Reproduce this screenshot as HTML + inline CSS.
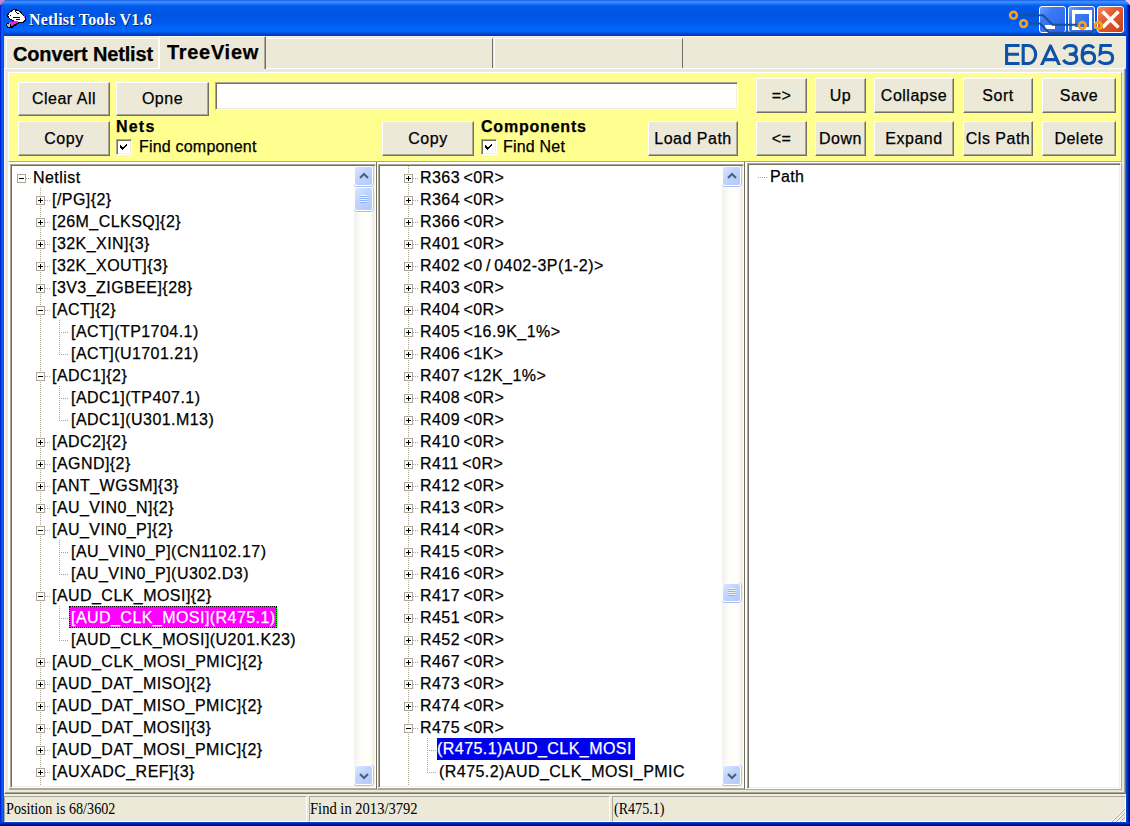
<!DOCTYPE html><html><head><meta charset="utf-8"><style>
html,body{margin:0;padding:0}
body{width:1130px;height:826px;overflow:hidden;position:relative;background:#ECE9D8;font-family:"Liberation Sans",sans-serif;font-size:16px;color:#000;-webkit-text-stroke:0.25px currentColor}
div{box-sizing:border-box}
.t{position:absolute;white-space:nowrap}
.btn{position:absolute;background:#ECE9D8;border-top:1px solid #fff;border-left:1px solid #fff;border-right:1px solid #716F64;border-bottom:1px solid #716F64;box-shadow:inset -1px -1px 0 #ACA899;text-align:center;font-size:16px;letter-spacing:0.5px}
.btn span{position:absolute;left:0;right:0;top:0;bottom:0;display:flex;align-items:center;justify-content:center}
</style></head><body>
<div style="position:absolute;left:0;top:0;width:1130px;height:36px;border-radius:5px 5px 0 0;
background:linear-gradient(to bottom,#0846D8 0px,#3D8FFF 1px,#2F86FF 3px,#0A62F0 5px,#0058E8 8px,#0054E3 14px,#0058EA 22px,#0063F8 27px,#0066FF 31px,#0050DC 33px,#003CC0 35px,#0036B0 36px)"></div>
<svg style="position:absolute;left:0;top:0" width="1130" height="8"><path d="M0 0 L5 0 L0 5 Z" fill="#D07ED0"/><path d="M1130 0 L1125 0 L1130 5 Z" fill="#F0C0F0"/></svg>
<div style="position:absolute;left:0;top:5px;width:4px;height:821px;background:linear-gradient(to right,#0019C8,#0030E0 1px,#1A6BFF 2px,#0050F0 3px)"></div>
<div style="position:absolute;left:1126px;top:5px;width:4px;height:821px;background:linear-gradient(to right,#0050F0,#0040D8 1px,#0020B0 2px,#001080 3px)"></div>
<div style="position:absolute;left:0;top:822px;width:1130px;height:4px;background:linear-gradient(to bottom,#0050F0,#0030C8 1px,#001CA0 2px,#001080 3px)"></div>
<svg style="position:absolute;left:4px;top:6px" width="26" height="26" viewBox="0 0 26 26" shape-rendering="crispEdges">
<path d="M3 8.5 L5 6 L8 4 L10 3 L12.5 3.2 L16 5 L18 7 L20 9.5 L21.8 10 L21.8 14.5 L20 16.5 L14 17 L9 15.3 L5 12.8 L3 10.8 Z" fill="#000"/>
<path d="M4.2 9 L6 6.8 L9 4.6 L11 4.1 L14 5.1 L16 6.3 L18 8.6 L20.6 11 L20.6 14 L19 15.5 L13 15.6 L8.5 14 L5 11.5 Z" fill="#fff"/>
<path d="M11 4.6 L13.5 7.6 L15.5 8.3 M9 11.6 L16 11.6 M11.5 13.6 L16 13.6 M5.5 9.2 L6.5 9.2" stroke="#000" stroke-width="1" fill="none"/>
<rect x="20" y="10" width="1.2" height="2.2" fill="#F020F0"/>
<path d="M6 16.5 L13 14.8 L14.5 15.8 L10 19 L7 19.8 Z" fill="#F020F0"/>
<path d="M7 20.5 L14.5 16 L16 16.6 L9 21.5 L7 22.5 Z" fill="#000"/>
<path d="M2.3 18 L6 16.3 L7 19.5 L6.5 22 L3.8 22 L2.3 19.8 Z" fill="#000"/>
<path d="M3.2 18.5 L5.6 17.3 L6.2 19.5 L5.8 21 L4 21 L3.2 19.5 Z" fill="#B8B8B8"/>
</svg>
<div class="t" style="left:29px;top:10px;line-height:20px;font-family:'Liberation Serif',serif;font-weight:bold;font-size:16px;color:#fff;letter-spacing:0.2px;-webkit-text-stroke:0;text-shadow:1px 1px 0 #0A2470">Netlist Tools V1.6</div>
<div style="position:absolute;left:1039px;top:6px;width:27px;height:27px;border:1px solid #fff;border-radius:3px;background:linear-gradient(135deg,#6FA0FF 0%,#3C7BF5 30%,#2663E8 100%)"><div style="position:absolute;left:5px;top:18px;width:10px;height:4px;background:#fff"></div></div>
<div style="position:absolute;left:1068px;top:6px;width:27px;height:27px;border:1px solid #fff;border-radius:3px;background:linear-gradient(135deg,#6FA0FF 0%,#3C7BF5 30%,#2663E8 100%)"><div style="position:absolute;left:3px;top:3px;width:20px;height:20px;border:3px solid #fff;border-top-width:4px"></div></div>
<div style="position:absolute;left:1097px;top:6px;width:27px;height:27px;border:1px solid #fff;border-radius:3px;background:linear-gradient(135deg,#F08A6A 0%,#E25B2E 40%,#C8401A 100%)"><svg style="position:absolute;left:0;top:0" width="25" height="25"><path d="M4.5 4.5 L20.5 20.5 M20.5 4.5 L4.5 20.5" stroke="#fff" stroke-width="3.6"/></svg></div>
<svg style="position:absolute;left:1000px;top:0" width="130" height="40">
<g fill="none" stroke="#1A5290" stroke-width="2">
<path d="M17 15.3 L43 15.3 L52.5 24.8 L78 24.8"/>
<path d="M27.5 23.6 L40 23.6 L49.3 32.8 L92 32.8 L97 27"/>
</g>
<g fill="none" stroke="#F5A020" stroke-width="2.6">
<circle cx="13.5" cy="15.3" r="3.4"/><circle cx="23.6" cy="23.6" r="3.4"/><circle cx="82.3" cy="25.5" r="3.4"/><circle cx="98.4" cy="25.5" r="3.4"/>
</g></svg>
<div style="position:absolute;left:4px;top:36px;width:1122px;height:1px;background:#FBF4DC"></div>
<div style="position:absolute;left:4px;top:68px;width:1122px;height:726px;border-top:1px solid #fff;border-left:1px solid #fff;border-right:1px solid #716F64;border-bottom:1px solid #716F64;box-shadow:inset -1px -1px 0 #ACA899"></div>
<div style="position:absolute;left:6px;top:38px;width:153px;height:31px;border:1px solid #fff;border-bottom:none"></div>
<div style="position:absolute;left:266px;top:38px;width:227px;height:30px;border-top:1px solid #fff;border-right:1px solid #716F64"></div>
<div style="position:absolute;left:494px;top:38px;width:189px;height:30px;border-top:1px solid #fff;border-left:1px solid #fff;border-right:1px solid #716F64"></div>
<div style="position:absolute;left:159px;top:36px;width:107px;height:33px;background:#ECE9D8;border-top:1px solid #fff;border-left:1px solid #fff;border-right:1px solid #716F64;box-shadow:inset -1px 0 0 #ACA899"></div>
<div class="t" style="left:13px;top:38px;line-height:33px;font-weight:bold;font-size:20px;letter-spacing:-0.15px">Convert Netlist</div>
<div class="t" style="left:167px;top:36px;line-height:33px;font-weight:bold;font-size:20px;letter-spacing:0.7px">TreeView</div>
<svg style="position:absolute;left:1000px;top:38px" width="122" height="32" viewBox="0 0 122 32">
<clipPath id="eclip"><rect x="0" y="4" width="122" height="23"/></clipPath>
<g fill="none" stroke="#0D52A8" stroke-width="3.1" stroke-linejoin="miter" clip-path="url(#eclip)">
<path d="M19.6 7.5 H6.6 V25.5 H19.6 M6.6 16.3 H19"/>
<path d="M23.2 7.5 H28.3 A7.4 9 0 0 1 28.3 25.5 H23.2 Z"/>
<path d="M41 28.5 L50.5 7.8 L60 28.5 M44 21.6 H57" stroke-linejoin="round"/>
<path d="M63.8 11.2 Q65.5 7.5 70.2 7.5 Q76.3 7.5 76.3 11.9 Q76.3 16.2 70.2 16.2 H68.8 M70.2 16.2 Q76.8 16.2 76.8 20.9 Q76.8 25.5 70.2 25.5 Q65.2 25.5 63.4 21.8"/>
<path d="M93.8 10.2 Q92 7.5 88.6 7.5 Q82.1 7.5 82.1 17.2 Q82.1 25.5 88.6 25.5 Q94.6 25.5 94.6 20 Q94.6 14.4 88.6 14.4 Q83.6 14.4 82.3 18.2"/>
<path d="M111.8 7.5 H101 L100.2 15.6 Q102.2 14.3 105.6 14.3 Q112.6 14.3 112.6 19.9 Q112.6 25.5 105.6 25.5 Q100.6 25.5 99 22.4"/>
</g></svg>
<div style="position:absolute;left:8px;top:72px;width:1114px;height:90px;background:#FFFF8F;border-top:1px solid #fff;border-left:1px solid #fff;border-right:1px solid #ACA899;border-bottom:1px solid #ACA899"></div>
<div style="position:absolute;left:8px;top:162px;width:1114px;height:628px;border-top:2px solid #fff;border-left:2px solid #fff;border-right:1px solid #ACA899;border-bottom:1px solid #ACA899"></div>
<div class="btn" style="left:18px;top:82px;width:92px;height:34px;"><span>Clear All</span></div>
<div class="btn" style="left:116px;top:82px;width:93px;height:34px;"><span>Opne</span></div>
<div style="position:absolute;left:215px;top:82px;width:523px;height:28px;background:#fff;border-top:1px solid #ACA899;border-left:1px solid #ACA899;border-right:1px solid #fff;border-bottom:1px solid #fff;box-shadow:inset 1px 1px 0 #716F64,inset -1px -1px 0 #F1EFE2"></div>
<div class="btn" style="left:18px;top:121px;width:92px;height:35px;"><span>Copy</span></div>
<div class="btn" style="left:382px;top:121px;width:92px;height:35px;"><span>Copy</span></div>
<div class="btn" style="left:648px;top:121px;width:90px;height:35px;"><span>Load Path</span></div>
<div class="btn" style="left:756px;top:78px;width:51px;height:35px;"><span>=&gt;</span></div>
<div class="btn" style="left:815px;top:78px;width:51px;height:35px;"><span>Up</span></div>
<div class="btn" style="left:874px;top:78px;width:80px;height:35px;"><span>Collapse</span></div>
<div class="btn" style="left:963px;top:78px;width:70px;height:35px;"><span>Sort</span></div>
<div class="btn" style="left:1042px;top:78px;width:74px;height:35px;"><span>Save</span></div>
<div class="btn" style="left:756px;top:121px;width:51px;height:35px;"><span>&lt;=</span></div>
<div class="btn" style="left:815px;top:121px;width:51px;height:35px;"><span>Down</span></div>
<div class="btn" style="left:874px;top:121px;width:80px;height:35px;"><span>Expand</span></div>
<div class="btn" style="left:963px;top:121px;width:70px;height:35px;"><span>Cls Path</span></div>
<div class="btn" style="left:1042px;top:121px;width:74px;height:35px;"><span>Delete</span></div>
<div class="t" style="left:116px;top:116px;line-height:22px;font-weight:bold;font-size:16px;letter-spacing:1.2px">Nets</div>
<div class="t" style="left:481px;top:116px;line-height:22px;font-weight:bold;font-size:16px;letter-spacing:0.8px">Components</div>
<div style="position:absolute;left:116px;top:139px;width:16px;height:16px;background:#fff;border-top:1px solid #ACA899;border-left:1px solid #ACA899;border-right:1px solid #fff;border-bottom:1px solid #fff;box-shadow:inset 1px 1px 0 #716F64,inset -1px -1px 0 #F1EFE2"><svg style="position:absolute;left:0;top:0" width="14" height="14" shape-rendering="crispEdges"><path d="M3 5h1v1h-1zM3 6h2v1h-2zM3 7h3v1h-3zM4 8h2v1h-2zM5 9h1v1h-1zM6 7h1v2h-1zM7 6h1v2h-1zM8 5h1v2h-1zM9 4h1v2h-1z" fill="#000"/></svg></div>
<div style="position:absolute;left:481px;top:139px;width:16px;height:16px;background:#fff;border-top:1px solid #ACA899;border-left:1px solid #ACA899;border-right:1px solid #fff;border-bottom:1px solid #fff;box-shadow:inset 1px 1px 0 #716F64,inset -1px -1px 0 #F1EFE2"><svg style="position:absolute;left:0;top:0" width="14" height="14" shape-rendering="crispEdges"><path d="M3 5h1v1h-1zM3 6h2v1h-2zM3 7h3v1h-3zM4 8h2v1h-2zM5 9h1v1h-1zM6 7h1v2h-1zM7 6h1v2h-1zM8 5h1v2h-1zM9 4h1v2h-1z" fill="#000"/></svg></div>
<div class="t" style="left:139px;top:136px;line-height:22px;letter-spacing:0.2px">Find component</div>
<div class="t" style="left:503px;top:136px;line-height:22px;letter-spacing:0.2px">Find Net</div>
<div style="position:absolute;left:10px;top:164px;width:366px;height:624px;background:#fff;border-top:1px solid #ACA899;border-left:1px solid #ACA899;border-right:1px solid #fff;border-bottom:1px solid #fff;box-shadow:inset 1px 1px 0 #716F64,inset -1px -1px 0 #F1EFE2"></div>
<div style="position:absolute;left:378px;top:164px;width:366px;height:624px;background:#fff;border-top:1px solid #ACA899;border-left:1px solid #ACA899;border-right:1px solid #fff;border-bottom:1px solid #fff;box-shadow:inset 1px 1px 0 #716F64,inset -1px -1px 0 #F1EFE2"></div>
<div style="position:absolute;left:747px;top:163px;width:374px;height:626px;background:#fff;border-top:1px solid #ACA899;border-left:1px solid #ACA899;border-right:1px solid #fff;border-bottom:1px solid #fff;box-shadow:inset 1px 1px 0 #716F64,inset -1px -1px 0 #F1EFE2"></div>
<div style="position:absolute;left:9px;top:788px;width:737px;height:1px;background:#ACA899"></div>
<div style="position:absolute;left:376px;top:162px;width:1px;height:627px;background:#716F64"></div>
<div style="position:absolute;left:377px;top:162px;width:1px;height:627px;background:#fff"></div>
<div style="position:absolute;left:744px;top:162px;width:1px;height:627px;background:#716F64"></div>
<div style="position:absolute;left:745px;top:162px;width:2px;height:627px;background:#fff"></div>
<div style="position:absolute;left:40px;top:188px;width:1px;height:597px;background:repeating-linear-gradient(to bottom,#A9A493 0,#A9A493 1px,transparent 1px,transparent 2px)"></div>
<div style="position:absolute;left:59px;top:320px;width:1px;height:34px;background:repeating-linear-gradient(to bottom,#A9A493 0,#A9A493 1px,transparent 1px,transparent 2px)"></div>
<div style="position:absolute;left:59px;top:386px;width:1px;height:34px;background:repeating-linear-gradient(to bottom,#A9A493 0,#A9A493 1px,transparent 1px,transparent 2px)"></div>
<div style="position:absolute;left:59px;top:540px;width:1px;height:34px;background:repeating-linear-gradient(to bottom,#A9A493 0,#A9A493 1px,transparent 1px,transparent 2px)"></div>
<div style="position:absolute;left:59px;top:606px;width:1px;height:34px;background:repeating-linear-gradient(to bottom,#A9A493 0,#A9A493 1px,transparent 1px,transparent 2px)"></div>
<div style="position:absolute;left:0;top:0;width:354px;height:826px;overflow:hidden">
<div style="position:absolute;left:26px;top:178px;width:5px;height:1px;background:repeating-linear-gradient(to right,#A9A493 0,#A9A493 1px,transparent 1px,transparent 2px)"></div>
<div style="position:absolute;left:17px;top:174px;width:9px;height:9px;border:1px solid #ACA899;background:#fff"><div style="position:absolute;left:1px;top:3px;width:5px;height:1px;background:#000"></div></div>
<div class="t" style="left:33px;top:167px;line-height:22px;letter-spacing:0.45px;word-spacing:-1.5px">Netlist</div>
<div style="position:absolute;left:45px;top:200px;width:5px;height:1px;background:repeating-linear-gradient(to right,#A9A493 0,#A9A493 1px,transparent 1px,transparent 2px)"></div>
<div style="position:absolute;left:36px;top:196px;width:9px;height:9px;border:1px solid #ACA899;background:#fff"><div style="position:absolute;left:1px;top:3px;width:5px;height:1px;background:#000"></div><div style="position:absolute;left:3px;top:1px;width:1px;height:5px;background:#000"></div></div>
<div class="t" style="left:52px;top:189px;line-height:22px;letter-spacing:0.45px;word-spacing:-1.5px">[/PG]{2}</div>
<div style="position:absolute;left:45px;top:222px;width:5px;height:1px;background:repeating-linear-gradient(to right,#A9A493 0,#A9A493 1px,transparent 1px,transparent 2px)"></div>
<div style="position:absolute;left:36px;top:218px;width:9px;height:9px;border:1px solid #ACA899;background:#fff"><div style="position:absolute;left:1px;top:3px;width:5px;height:1px;background:#000"></div><div style="position:absolute;left:3px;top:1px;width:1px;height:5px;background:#000"></div></div>
<div class="t" style="left:52px;top:211px;line-height:22px;letter-spacing:0.45px;word-spacing:-1.5px">[26M_CLKSQ]{2}</div>
<div style="position:absolute;left:45px;top:244px;width:5px;height:1px;background:repeating-linear-gradient(to right,#A9A493 0,#A9A493 1px,transparent 1px,transparent 2px)"></div>
<div style="position:absolute;left:36px;top:240px;width:9px;height:9px;border:1px solid #ACA899;background:#fff"><div style="position:absolute;left:1px;top:3px;width:5px;height:1px;background:#000"></div><div style="position:absolute;left:3px;top:1px;width:1px;height:5px;background:#000"></div></div>
<div class="t" style="left:52px;top:233px;line-height:22px;letter-spacing:0.45px;word-spacing:-1.5px">[32K_XIN]{3}</div>
<div style="position:absolute;left:45px;top:266px;width:5px;height:1px;background:repeating-linear-gradient(to right,#A9A493 0,#A9A493 1px,transparent 1px,transparent 2px)"></div>
<div style="position:absolute;left:36px;top:262px;width:9px;height:9px;border:1px solid #ACA899;background:#fff"><div style="position:absolute;left:1px;top:3px;width:5px;height:1px;background:#000"></div><div style="position:absolute;left:3px;top:1px;width:1px;height:5px;background:#000"></div></div>
<div class="t" style="left:52px;top:255px;line-height:22px;letter-spacing:0.45px;word-spacing:-1.5px">[32K_XOUT]{3}</div>
<div style="position:absolute;left:45px;top:288px;width:5px;height:1px;background:repeating-linear-gradient(to right,#A9A493 0,#A9A493 1px,transparent 1px,transparent 2px)"></div>
<div style="position:absolute;left:36px;top:284px;width:9px;height:9px;border:1px solid #ACA899;background:#fff"><div style="position:absolute;left:1px;top:3px;width:5px;height:1px;background:#000"></div><div style="position:absolute;left:3px;top:1px;width:1px;height:5px;background:#000"></div></div>
<div class="t" style="left:52px;top:277px;line-height:22px;letter-spacing:0.45px;word-spacing:-1.5px">[3V3_ZIGBEE]{28}</div>
<div style="position:absolute;left:45px;top:310px;width:5px;height:1px;background:repeating-linear-gradient(to right,#A9A493 0,#A9A493 1px,transparent 1px,transparent 2px)"></div>
<div style="position:absolute;left:36px;top:306px;width:9px;height:9px;border:1px solid #ACA899;background:#fff"><div style="position:absolute;left:1px;top:3px;width:5px;height:1px;background:#000"></div></div>
<div class="t" style="left:52px;top:299px;line-height:22px;letter-spacing:0.45px;word-spacing:-1.5px">[ACT]{2}</div>
<div style="position:absolute;left:59px;top:332px;width:10px;height:1px;background:repeating-linear-gradient(to right,#A9A493 0,#A9A493 1px,transparent 1px,transparent 2px)"></div>
<div class="t" style="left:71px;top:321px;line-height:22px;letter-spacing:0.45px;word-spacing:-1.5px">[ACT](TP1704.1)</div>
<div style="position:absolute;left:59px;top:354px;width:10px;height:1px;background:repeating-linear-gradient(to right,#A9A493 0,#A9A493 1px,transparent 1px,transparent 2px)"></div>
<div class="t" style="left:71px;top:343px;line-height:22px;letter-spacing:0.45px;word-spacing:-1.5px">[ACT](U1701.21)</div>
<div style="position:absolute;left:45px;top:376px;width:5px;height:1px;background:repeating-linear-gradient(to right,#A9A493 0,#A9A493 1px,transparent 1px,transparent 2px)"></div>
<div style="position:absolute;left:36px;top:372px;width:9px;height:9px;border:1px solid #ACA899;background:#fff"><div style="position:absolute;left:1px;top:3px;width:5px;height:1px;background:#000"></div></div>
<div class="t" style="left:52px;top:365px;line-height:22px;letter-spacing:0.45px;word-spacing:-1.5px">[ADC1]{2}</div>
<div style="position:absolute;left:59px;top:398px;width:10px;height:1px;background:repeating-linear-gradient(to right,#A9A493 0,#A9A493 1px,transparent 1px,transparent 2px)"></div>
<div class="t" style="left:71px;top:387px;line-height:22px;letter-spacing:0.45px;word-spacing:-1.5px">[ADC1](TP407.1)</div>
<div style="position:absolute;left:59px;top:420px;width:10px;height:1px;background:repeating-linear-gradient(to right,#A9A493 0,#A9A493 1px,transparent 1px,transparent 2px)"></div>
<div class="t" style="left:71px;top:409px;line-height:22px;letter-spacing:0.45px;word-spacing:-1.5px">[ADC1](U301.M13)</div>
<div style="position:absolute;left:45px;top:442px;width:5px;height:1px;background:repeating-linear-gradient(to right,#A9A493 0,#A9A493 1px,transparent 1px,transparent 2px)"></div>
<div style="position:absolute;left:36px;top:438px;width:9px;height:9px;border:1px solid #ACA899;background:#fff"><div style="position:absolute;left:1px;top:3px;width:5px;height:1px;background:#000"></div><div style="position:absolute;left:3px;top:1px;width:1px;height:5px;background:#000"></div></div>
<div class="t" style="left:52px;top:431px;line-height:22px;letter-spacing:0.45px;word-spacing:-1.5px">[ADC2]{2}</div>
<div style="position:absolute;left:45px;top:464px;width:5px;height:1px;background:repeating-linear-gradient(to right,#A9A493 0,#A9A493 1px,transparent 1px,transparent 2px)"></div>
<div style="position:absolute;left:36px;top:460px;width:9px;height:9px;border:1px solid #ACA899;background:#fff"><div style="position:absolute;left:1px;top:3px;width:5px;height:1px;background:#000"></div><div style="position:absolute;left:3px;top:1px;width:1px;height:5px;background:#000"></div></div>
<div class="t" style="left:52px;top:453px;line-height:22px;letter-spacing:0.45px;word-spacing:-1.5px">[AGND]{2}</div>
<div style="position:absolute;left:45px;top:486px;width:5px;height:1px;background:repeating-linear-gradient(to right,#A9A493 0,#A9A493 1px,transparent 1px,transparent 2px)"></div>
<div style="position:absolute;left:36px;top:482px;width:9px;height:9px;border:1px solid #ACA899;background:#fff"><div style="position:absolute;left:1px;top:3px;width:5px;height:1px;background:#000"></div><div style="position:absolute;left:3px;top:1px;width:1px;height:5px;background:#000"></div></div>
<div class="t" style="left:52px;top:475px;line-height:22px;letter-spacing:0.45px;word-spacing:-1.5px">[ANT_WGSM]{3}</div>
<div style="position:absolute;left:45px;top:508px;width:5px;height:1px;background:repeating-linear-gradient(to right,#A9A493 0,#A9A493 1px,transparent 1px,transparent 2px)"></div>
<div style="position:absolute;left:36px;top:504px;width:9px;height:9px;border:1px solid #ACA899;background:#fff"><div style="position:absolute;left:1px;top:3px;width:5px;height:1px;background:#000"></div><div style="position:absolute;left:3px;top:1px;width:1px;height:5px;background:#000"></div></div>
<div class="t" style="left:52px;top:497px;line-height:22px;letter-spacing:0.45px;word-spacing:-1.5px">[AU_VIN0_N]{2}</div>
<div style="position:absolute;left:45px;top:530px;width:5px;height:1px;background:repeating-linear-gradient(to right,#A9A493 0,#A9A493 1px,transparent 1px,transparent 2px)"></div>
<div style="position:absolute;left:36px;top:526px;width:9px;height:9px;border:1px solid #ACA899;background:#fff"><div style="position:absolute;left:1px;top:3px;width:5px;height:1px;background:#000"></div></div>
<div class="t" style="left:52px;top:519px;line-height:22px;letter-spacing:0.45px;word-spacing:-1.5px">[AU_VIN0_P]{2}</div>
<div style="position:absolute;left:59px;top:552px;width:10px;height:1px;background:repeating-linear-gradient(to right,#A9A493 0,#A9A493 1px,transparent 1px,transparent 2px)"></div>
<div class="t" style="left:71px;top:541px;line-height:22px;letter-spacing:0.45px;word-spacing:-1.5px">[AU_VIN0_P](CN1102.17)</div>
<div style="position:absolute;left:59px;top:574px;width:10px;height:1px;background:repeating-linear-gradient(to right,#A9A493 0,#A9A493 1px,transparent 1px,transparent 2px)"></div>
<div class="t" style="left:71px;top:563px;line-height:22px;letter-spacing:0.45px;word-spacing:-1.5px">[AU_VIN0_P](U302.D3)</div>
<div style="position:absolute;left:45px;top:596px;width:5px;height:1px;background:repeating-linear-gradient(to right,#A9A493 0,#A9A493 1px,transparent 1px,transparent 2px)"></div>
<div style="position:absolute;left:36px;top:592px;width:9px;height:9px;border:1px solid #ACA899;background:#fff"><div style="position:absolute;left:1px;top:3px;width:5px;height:1px;background:#000"></div></div>
<div class="t" style="left:52px;top:585px;line-height:22px;letter-spacing:0.45px;word-spacing:-1.5px">[AUD_CLK_MOSI]{2}</div>
<div style="position:absolute;left:59px;top:618px;width:10px;height:1px;background:repeating-linear-gradient(to right,#A9A493 0,#A9A493 1px,transparent 1px,transparent 2px)"></div>
<div class="t" style="left:69px;top:606px;height:22px;line-height:22px;padding:0 0 0 1px;background:#FF00FF;color:#fff;letter-spacing:0.45px;word-spacing:-1.5px;border:1px solid #00FF00">[AUD_CLK_MOSI](R475.1)<div style="position:absolute;left:-1px;top:-1px;right:-1px;bottom:-1px;border:1px dotted #000"></div></div>
<div style="position:absolute;left:59px;top:640px;width:10px;height:1px;background:repeating-linear-gradient(to right,#A9A493 0,#A9A493 1px,transparent 1px,transparent 2px)"></div>
<div class="t" style="left:71px;top:629px;line-height:22px;letter-spacing:0.45px;word-spacing:-1.5px">[AUD_CLK_MOSI](U201.K23)</div>
<div style="position:absolute;left:45px;top:662px;width:5px;height:1px;background:repeating-linear-gradient(to right,#A9A493 0,#A9A493 1px,transparent 1px,transparent 2px)"></div>
<div style="position:absolute;left:36px;top:658px;width:9px;height:9px;border:1px solid #ACA899;background:#fff"><div style="position:absolute;left:1px;top:3px;width:5px;height:1px;background:#000"></div><div style="position:absolute;left:3px;top:1px;width:1px;height:5px;background:#000"></div></div>
<div class="t" style="left:52px;top:651px;line-height:22px;letter-spacing:0.45px;word-spacing:-1.5px">[AUD_CLK_MOSI_PMIC]{2}</div>
<div style="position:absolute;left:45px;top:684px;width:5px;height:1px;background:repeating-linear-gradient(to right,#A9A493 0,#A9A493 1px,transparent 1px,transparent 2px)"></div>
<div style="position:absolute;left:36px;top:680px;width:9px;height:9px;border:1px solid #ACA899;background:#fff"><div style="position:absolute;left:1px;top:3px;width:5px;height:1px;background:#000"></div><div style="position:absolute;left:3px;top:1px;width:1px;height:5px;background:#000"></div></div>
<div class="t" style="left:52px;top:673px;line-height:22px;letter-spacing:0.45px;word-spacing:-1.5px">[AUD_DAT_MISO]{2}</div>
<div style="position:absolute;left:45px;top:706px;width:5px;height:1px;background:repeating-linear-gradient(to right,#A9A493 0,#A9A493 1px,transparent 1px,transparent 2px)"></div>
<div style="position:absolute;left:36px;top:702px;width:9px;height:9px;border:1px solid #ACA899;background:#fff"><div style="position:absolute;left:1px;top:3px;width:5px;height:1px;background:#000"></div><div style="position:absolute;left:3px;top:1px;width:1px;height:5px;background:#000"></div></div>
<div class="t" style="left:52px;top:695px;line-height:22px;letter-spacing:0.45px;word-spacing:-1.5px">[AUD_DAT_MISO_PMIC]{2}</div>
<div style="position:absolute;left:45px;top:728px;width:5px;height:1px;background:repeating-linear-gradient(to right,#A9A493 0,#A9A493 1px,transparent 1px,transparent 2px)"></div>
<div style="position:absolute;left:36px;top:724px;width:9px;height:9px;border:1px solid #ACA899;background:#fff"><div style="position:absolute;left:1px;top:3px;width:5px;height:1px;background:#000"></div><div style="position:absolute;left:3px;top:1px;width:1px;height:5px;background:#000"></div></div>
<div class="t" style="left:52px;top:717px;line-height:22px;letter-spacing:0.45px;word-spacing:-1.5px">[AUD_DAT_MOSI]{3}</div>
<div style="position:absolute;left:45px;top:750px;width:5px;height:1px;background:repeating-linear-gradient(to right,#A9A493 0,#A9A493 1px,transparent 1px,transparent 2px)"></div>
<div style="position:absolute;left:36px;top:746px;width:9px;height:9px;border:1px solid #ACA899;background:#fff"><div style="position:absolute;left:1px;top:3px;width:5px;height:1px;background:#000"></div><div style="position:absolute;left:3px;top:1px;width:1px;height:5px;background:#000"></div></div>
<div class="t" style="left:52px;top:739px;line-height:22px;letter-spacing:0.45px;word-spacing:-1.5px">[AUD_DAT_MOSI_PMIC]{2}</div>
<div style="position:absolute;left:45px;top:772px;width:5px;height:1px;background:repeating-linear-gradient(to right,#A9A493 0,#A9A493 1px,transparent 1px,transparent 2px)"></div>
<div style="position:absolute;left:36px;top:768px;width:9px;height:9px;border:1px solid #ACA899;background:#fff"><div style="position:absolute;left:1px;top:3px;width:5px;height:1px;background:#000"></div><div style="position:absolute;left:3px;top:1px;width:1px;height:5px;background:#000"></div></div>
<div class="t" style="left:52px;top:761px;line-height:22px;letter-spacing:0.45px;word-spacing:-1.5px">[AUXADC_REF]{3}</div>
</div>
<div style="position:absolute;left:408px;top:166px;width:1px;height:619px;background:repeating-linear-gradient(to bottom,#A9A493 0,#A9A493 1px,transparent 1px,transparent 2px)"></div>
<div style="position:absolute;left:427px;top:738px;width:1px;height:34px;background:repeating-linear-gradient(to bottom,#A9A493 0,#A9A493 1px,transparent 1px,transparent 2px)"></div>
<div style="position:absolute;left:0;top:0;width:722px;height:826px;overflow:hidden">
<div style="position:absolute;left:413px;top:178px;width:5px;height:1px;background:repeating-linear-gradient(to right,#A9A493 0,#A9A493 1px,transparent 1px,transparent 2px)"></div>
<div style="position:absolute;left:404px;top:174px;width:9px;height:9px;border:1px solid #ACA899;background:#fff"><div style="position:absolute;left:1px;top:3px;width:5px;height:1px;background:#000"></div><div style="position:absolute;left:3px;top:1px;width:1px;height:5px;background:#000"></div></div>
<div class="t" style="left:420px;top:167px;line-height:22px;letter-spacing:0.45px;word-spacing:-1.5px">R363 &lt;0R&gt;</div>
<div style="position:absolute;left:413px;top:200px;width:5px;height:1px;background:repeating-linear-gradient(to right,#A9A493 0,#A9A493 1px,transparent 1px,transparent 2px)"></div>
<div style="position:absolute;left:404px;top:196px;width:9px;height:9px;border:1px solid #ACA899;background:#fff"><div style="position:absolute;left:1px;top:3px;width:5px;height:1px;background:#000"></div><div style="position:absolute;left:3px;top:1px;width:1px;height:5px;background:#000"></div></div>
<div class="t" style="left:420px;top:189px;line-height:22px;letter-spacing:0.45px;word-spacing:-1.5px">R364 &lt;0R&gt;</div>
<div style="position:absolute;left:413px;top:222px;width:5px;height:1px;background:repeating-linear-gradient(to right,#A9A493 0,#A9A493 1px,transparent 1px,transparent 2px)"></div>
<div style="position:absolute;left:404px;top:218px;width:9px;height:9px;border:1px solid #ACA899;background:#fff"><div style="position:absolute;left:1px;top:3px;width:5px;height:1px;background:#000"></div><div style="position:absolute;left:3px;top:1px;width:1px;height:5px;background:#000"></div></div>
<div class="t" style="left:420px;top:211px;line-height:22px;letter-spacing:0.45px;word-spacing:-1.5px">R366 &lt;0R&gt;</div>
<div style="position:absolute;left:413px;top:244px;width:5px;height:1px;background:repeating-linear-gradient(to right,#A9A493 0,#A9A493 1px,transparent 1px,transparent 2px)"></div>
<div style="position:absolute;left:404px;top:240px;width:9px;height:9px;border:1px solid #ACA899;background:#fff"><div style="position:absolute;left:1px;top:3px;width:5px;height:1px;background:#000"></div><div style="position:absolute;left:3px;top:1px;width:1px;height:5px;background:#000"></div></div>
<div class="t" style="left:420px;top:233px;line-height:22px;letter-spacing:0.45px;word-spacing:-1.5px">R401 &lt;0R&gt;</div>
<div style="position:absolute;left:413px;top:266px;width:5px;height:1px;background:repeating-linear-gradient(to right,#A9A493 0,#A9A493 1px,transparent 1px,transparent 2px)"></div>
<div style="position:absolute;left:404px;top:262px;width:9px;height:9px;border:1px solid #ACA899;background:#fff"><div style="position:absolute;left:1px;top:3px;width:5px;height:1px;background:#000"></div><div style="position:absolute;left:3px;top:1px;width:1px;height:5px;background:#000"></div></div>
<div class="t" style="left:420px;top:255px;line-height:22px;letter-spacing:0.45px;word-spacing:-1.5px">R402 &lt;0 / 0402-3P(1-2)&gt;</div>
<div style="position:absolute;left:413px;top:288px;width:5px;height:1px;background:repeating-linear-gradient(to right,#A9A493 0,#A9A493 1px,transparent 1px,transparent 2px)"></div>
<div style="position:absolute;left:404px;top:284px;width:9px;height:9px;border:1px solid #ACA899;background:#fff"><div style="position:absolute;left:1px;top:3px;width:5px;height:1px;background:#000"></div><div style="position:absolute;left:3px;top:1px;width:1px;height:5px;background:#000"></div></div>
<div class="t" style="left:420px;top:277px;line-height:22px;letter-spacing:0.45px;word-spacing:-1.5px">R403 &lt;0R&gt;</div>
<div style="position:absolute;left:413px;top:310px;width:5px;height:1px;background:repeating-linear-gradient(to right,#A9A493 0,#A9A493 1px,transparent 1px,transparent 2px)"></div>
<div style="position:absolute;left:404px;top:306px;width:9px;height:9px;border:1px solid #ACA899;background:#fff"><div style="position:absolute;left:1px;top:3px;width:5px;height:1px;background:#000"></div><div style="position:absolute;left:3px;top:1px;width:1px;height:5px;background:#000"></div></div>
<div class="t" style="left:420px;top:299px;line-height:22px;letter-spacing:0.45px;word-spacing:-1.5px">R404 &lt;0R&gt;</div>
<div style="position:absolute;left:413px;top:332px;width:5px;height:1px;background:repeating-linear-gradient(to right,#A9A493 0,#A9A493 1px,transparent 1px,transparent 2px)"></div>
<div style="position:absolute;left:404px;top:328px;width:9px;height:9px;border:1px solid #ACA899;background:#fff"><div style="position:absolute;left:1px;top:3px;width:5px;height:1px;background:#000"></div><div style="position:absolute;left:3px;top:1px;width:1px;height:5px;background:#000"></div></div>
<div class="t" style="left:420px;top:321px;line-height:22px;letter-spacing:0.45px;word-spacing:-1.5px">R405 &lt;16.9K_1%&gt;</div>
<div style="position:absolute;left:413px;top:354px;width:5px;height:1px;background:repeating-linear-gradient(to right,#A9A493 0,#A9A493 1px,transparent 1px,transparent 2px)"></div>
<div style="position:absolute;left:404px;top:350px;width:9px;height:9px;border:1px solid #ACA899;background:#fff"><div style="position:absolute;left:1px;top:3px;width:5px;height:1px;background:#000"></div><div style="position:absolute;left:3px;top:1px;width:1px;height:5px;background:#000"></div></div>
<div class="t" style="left:420px;top:343px;line-height:22px;letter-spacing:0.45px;word-spacing:-1.5px">R406 &lt;1K&gt;</div>
<div style="position:absolute;left:413px;top:376px;width:5px;height:1px;background:repeating-linear-gradient(to right,#A9A493 0,#A9A493 1px,transparent 1px,transparent 2px)"></div>
<div style="position:absolute;left:404px;top:372px;width:9px;height:9px;border:1px solid #ACA899;background:#fff"><div style="position:absolute;left:1px;top:3px;width:5px;height:1px;background:#000"></div><div style="position:absolute;left:3px;top:1px;width:1px;height:5px;background:#000"></div></div>
<div class="t" style="left:420px;top:365px;line-height:22px;letter-spacing:0.45px;word-spacing:-1.5px">R407 &lt;12K_1%&gt;</div>
<div style="position:absolute;left:413px;top:398px;width:5px;height:1px;background:repeating-linear-gradient(to right,#A9A493 0,#A9A493 1px,transparent 1px,transparent 2px)"></div>
<div style="position:absolute;left:404px;top:394px;width:9px;height:9px;border:1px solid #ACA899;background:#fff"><div style="position:absolute;left:1px;top:3px;width:5px;height:1px;background:#000"></div><div style="position:absolute;left:3px;top:1px;width:1px;height:5px;background:#000"></div></div>
<div class="t" style="left:420px;top:387px;line-height:22px;letter-spacing:0.45px;word-spacing:-1.5px">R408 &lt;0R&gt;</div>
<div style="position:absolute;left:413px;top:420px;width:5px;height:1px;background:repeating-linear-gradient(to right,#A9A493 0,#A9A493 1px,transparent 1px,transparent 2px)"></div>
<div style="position:absolute;left:404px;top:416px;width:9px;height:9px;border:1px solid #ACA899;background:#fff"><div style="position:absolute;left:1px;top:3px;width:5px;height:1px;background:#000"></div><div style="position:absolute;left:3px;top:1px;width:1px;height:5px;background:#000"></div></div>
<div class="t" style="left:420px;top:409px;line-height:22px;letter-spacing:0.45px;word-spacing:-1.5px">R409 &lt;0R&gt;</div>
<div style="position:absolute;left:413px;top:442px;width:5px;height:1px;background:repeating-linear-gradient(to right,#A9A493 0,#A9A493 1px,transparent 1px,transparent 2px)"></div>
<div style="position:absolute;left:404px;top:438px;width:9px;height:9px;border:1px solid #ACA899;background:#fff"><div style="position:absolute;left:1px;top:3px;width:5px;height:1px;background:#000"></div><div style="position:absolute;left:3px;top:1px;width:1px;height:5px;background:#000"></div></div>
<div class="t" style="left:420px;top:431px;line-height:22px;letter-spacing:0.45px;word-spacing:-1.5px">R410 &lt;0R&gt;</div>
<div style="position:absolute;left:413px;top:464px;width:5px;height:1px;background:repeating-linear-gradient(to right,#A9A493 0,#A9A493 1px,transparent 1px,transparent 2px)"></div>
<div style="position:absolute;left:404px;top:460px;width:9px;height:9px;border:1px solid #ACA899;background:#fff"><div style="position:absolute;left:1px;top:3px;width:5px;height:1px;background:#000"></div><div style="position:absolute;left:3px;top:1px;width:1px;height:5px;background:#000"></div></div>
<div class="t" style="left:420px;top:453px;line-height:22px;letter-spacing:0.45px;word-spacing:-1.5px">R411 &lt;0R&gt;</div>
<div style="position:absolute;left:413px;top:486px;width:5px;height:1px;background:repeating-linear-gradient(to right,#A9A493 0,#A9A493 1px,transparent 1px,transparent 2px)"></div>
<div style="position:absolute;left:404px;top:482px;width:9px;height:9px;border:1px solid #ACA899;background:#fff"><div style="position:absolute;left:1px;top:3px;width:5px;height:1px;background:#000"></div><div style="position:absolute;left:3px;top:1px;width:1px;height:5px;background:#000"></div></div>
<div class="t" style="left:420px;top:475px;line-height:22px;letter-spacing:0.45px;word-spacing:-1.5px">R412 &lt;0R&gt;</div>
<div style="position:absolute;left:413px;top:508px;width:5px;height:1px;background:repeating-linear-gradient(to right,#A9A493 0,#A9A493 1px,transparent 1px,transparent 2px)"></div>
<div style="position:absolute;left:404px;top:504px;width:9px;height:9px;border:1px solid #ACA899;background:#fff"><div style="position:absolute;left:1px;top:3px;width:5px;height:1px;background:#000"></div><div style="position:absolute;left:3px;top:1px;width:1px;height:5px;background:#000"></div></div>
<div class="t" style="left:420px;top:497px;line-height:22px;letter-spacing:0.45px;word-spacing:-1.5px">R413 &lt;0R&gt;</div>
<div style="position:absolute;left:413px;top:530px;width:5px;height:1px;background:repeating-linear-gradient(to right,#A9A493 0,#A9A493 1px,transparent 1px,transparent 2px)"></div>
<div style="position:absolute;left:404px;top:526px;width:9px;height:9px;border:1px solid #ACA899;background:#fff"><div style="position:absolute;left:1px;top:3px;width:5px;height:1px;background:#000"></div><div style="position:absolute;left:3px;top:1px;width:1px;height:5px;background:#000"></div></div>
<div class="t" style="left:420px;top:519px;line-height:22px;letter-spacing:0.45px;word-spacing:-1.5px">R414 &lt;0R&gt;</div>
<div style="position:absolute;left:413px;top:552px;width:5px;height:1px;background:repeating-linear-gradient(to right,#A9A493 0,#A9A493 1px,transparent 1px,transparent 2px)"></div>
<div style="position:absolute;left:404px;top:548px;width:9px;height:9px;border:1px solid #ACA899;background:#fff"><div style="position:absolute;left:1px;top:3px;width:5px;height:1px;background:#000"></div><div style="position:absolute;left:3px;top:1px;width:1px;height:5px;background:#000"></div></div>
<div class="t" style="left:420px;top:541px;line-height:22px;letter-spacing:0.45px;word-spacing:-1.5px">R415 &lt;0R&gt;</div>
<div style="position:absolute;left:413px;top:574px;width:5px;height:1px;background:repeating-linear-gradient(to right,#A9A493 0,#A9A493 1px,transparent 1px,transparent 2px)"></div>
<div style="position:absolute;left:404px;top:570px;width:9px;height:9px;border:1px solid #ACA899;background:#fff"><div style="position:absolute;left:1px;top:3px;width:5px;height:1px;background:#000"></div><div style="position:absolute;left:3px;top:1px;width:1px;height:5px;background:#000"></div></div>
<div class="t" style="left:420px;top:563px;line-height:22px;letter-spacing:0.45px;word-spacing:-1.5px">R416 &lt;0R&gt;</div>
<div style="position:absolute;left:413px;top:596px;width:5px;height:1px;background:repeating-linear-gradient(to right,#A9A493 0,#A9A493 1px,transparent 1px,transparent 2px)"></div>
<div style="position:absolute;left:404px;top:592px;width:9px;height:9px;border:1px solid #ACA899;background:#fff"><div style="position:absolute;left:1px;top:3px;width:5px;height:1px;background:#000"></div><div style="position:absolute;left:3px;top:1px;width:1px;height:5px;background:#000"></div></div>
<div class="t" style="left:420px;top:585px;line-height:22px;letter-spacing:0.45px;word-spacing:-1.5px">R417 &lt;0R&gt;</div>
<div style="position:absolute;left:413px;top:618px;width:5px;height:1px;background:repeating-linear-gradient(to right,#A9A493 0,#A9A493 1px,transparent 1px,transparent 2px)"></div>
<div style="position:absolute;left:404px;top:614px;width:9px;height:9px;border:1px solid #ACA899;background:#fff"><div style="position:absolute;left:1px;top:3px;width:5px;height:1px;background:#000"></div><div style="position:absolute;left:3px;top:1px;width:1px;height:5px;background:#000"></div></div>
<div class="t" style="left:420px;top:607px;line-height:22px;letter-spacing:0.45px;word-spacing:-1.5px">R451 &lt;0R&gt;</div>
<div style="position:absolute;left:413px;top:640px;width:5px;height:1px;background:repeating-linear-gradient(to right,#A9A493 0,#A9A493 1px,transparent 1px,transparent 2px)"></div>
<div style="position:absolute;left:404px;top:636px;width:9px;height:9px;border:1px solid #ACA899;background:#fff"><div style="position:absolute;left:1px;top:3px;width:5px;height:1px;background:#000"></div><div style="position:absolute;left:3px;top:1px;width:1px;height:5px;background:#000"></div></div>
<div class="t" style="left:420px;top:629px;line-height:22px;letter-spacing:0.45px;word-spacing:-1.5px">R452 &lt;0R&gt;</div>
<div style="position:absolute;left:413px;top:662px;width:5px;height:1px;background:repeating-linear-gradient(to right,#A9A493 0,#A9A493 1px,transparent 1px,transparent 2px)"></div>
<div style="position:absolute;left:404px;top:658px;width:9px;height:9px;border:1px solid #ACA899;background:#fff"><div style="position:absolute;left:1px;top:3px;width:5px;height:1px;background:#000"></div><div style="position:absolute;left:3px;top:1px;width:1px;height:5px;background:#000"></div></div>
<div class="t" style="left:420px;top:651px;line-height:22px;letter-spacing:0.45px;word-spacing:-1.5px">R467 &lt;0R&gt;</div>
<div style="position:absolute;left:413px;top:684px;width:5px;height:1px;background:repeating-linear-gradient(to right,#A9A493 0,#A9A493 1px,transparent 1px,transparent 2px)"></div>
<div style="position:absolute;left:404px;top:680px;width:9px;height:9px;border:1px solid #ACA899;background:#fff"><div style="position:absolute;left:1px;top:3px;width:5px;height:1px;background:#000"></div><div style="position:absolute;left:3px;top:1px;width:1px;height:5px;background:#000"></div></div>
<div class="t" style="left:420px;top:673px;line-height:22px;letter-spacing:0.45px;word-spacing:-1.5px">R473 &lt;0R&gt;</div>
<div style="position:absolute;left:413px;top:706px;width:5px;height:1px;background:repeating-linear-gradient(to right,#A9A493 0,#A9A493 1px,transparent 1px,transparent 2px)"></div>
<div style="position:absolute;left:404px;top:702px;width:9px;height:9px;border:1px solid #ACA899;background:#fff"><div style="position:absolute;left:1px;top:3px;width:5px;height:1px;background:#000"></div><div style="position:absolute;left:3px;top:1px;width:1px;height:5px;background:#000"></div></div>
<div class="t" style="left:420px;top:695px;line-height:22px;letter-spacing:0.45px;word-spacing:-1.5px">R474 &lt;0R&gt;</div>
<div style="position:absolute;left:413px;top:728px;width:5px;height:1px;background:repeating-linear-gradient(to right,#A9A493 0,#A9A493 1px,transparent 1px,transparent 2px)"></div>
<div style="position:absolute;left:404px;top:724px;width:9px;height:9px;border:1px solid #ACA899;background:#fff"><div style="position:absolute;left:1px;top:3px;width:5px;height:1px;background:#000"></div></div>
<div class="t" style="left:420px;top:717px;line-height:22px;letter-spacing:0.45px;word-spacing:-1.5px">R475 &lt;0R&gt;</div>
<div style="position:absolute;left:427px;top:750px;width:10px;height:1px;background:repeating-linear-gradient(to right,#A9A493 0,#A9A493 1px,transparent 1px,transparent 2px)"></div>
<div class="t" style="left:437px;top:738px;height:22px;line-height:22px;padding:0 3px 0 0;background:#0000F0;color:#fff;letter-spacing:0.45px;word-spacing:-1.5px">(R475.1)AUD_CLK_MOSI</div>
<div style="position:absolute;left:427px;top:772px;width:10px;height:1px;background:repeating-linear-gradient(to right,#A9A493 0,#A9A493 1px,transparent 1px,transparent 2px)"></div>
<div class="t" style="left:439px;top:761px;line-height:22px;letter-spacing:0.45px;word-spacing:-1.5px">(R475.2)AUD_CLK_MOSI_PMIC</div>
</div>
<div style="position:absolute;left:758px;top:177px;width:10px;height:1px;background:repeating-linear-gradient(to right,#A9A493 0,#A9A493 1px,transparent 1px,transparent 2px)"></div>
<div class="t" style="left:770px;top:166px;line-height:22px;letter-spacing:0.3px">Path</div>
<div style="position:absolute;left:354px;top:166px;width:20px;height:620px;background:linear-gradient(to right,#F3F1EC,#FEFEFB 40%,#FEFEFB 80%,#EEEDE5)"></div>
<div style="position:absolute;left:354px;top:166px;width:19px;height:20px;border:1px solid #fff;border-radius:3px;background:linear-gradient(135deg,#DCE6FD 0%,#C3D5FD 40%,#B3C8F9 100%);box-shadow:0 1px 0 #A8BEF0, 1px 0 0 #B0C4F4"><svg style="position:absolute;left:0;top:0" width="18" height="19"><path d="M5 11 L9 7 L13 11" fill="none" stroke="#4D6185" stroke-width="2.2"/></svg></div>
<div style="position:absolute;left:354px;top:187px;width:19px;height:24px;border:1px solid #fff;border-radius:3px;background:linear-gradient(135deg,#DCE6FD 0%,#C3D5FD 40%,#B3C8F9 100%);box-shadow:0 1px 0 #A8BEF0, 1px 0 0 #B0C4F4"><div style="position:absolute;left:5px;top:8px;width:7px;height:1px;background:#8CB0F8"></div><div style="position:absolute;left:5px;top:7px;width:7px;height:1px;background:#EEF4FE"></div><div style="position:absolute;left:5px;top:10px;width:7px;height:1px;background:#8CB0F8"></div><div style="position:absolute;left:5px;top:9px;width:7px;height:1px;background:#EEF4FE"></div><div style="position:absolute;left:5px;top:12px;width:7px;height:1px;background:#8CB0F8"></div><div style="position:absolute;left:5px;top:11px;width:7px;height:1px;background:#EEF4FE"></div><div style="position:absolute;left:5px;top:14px;width:7px;height:1px;background:#8CB0F8"></div><div style="position:absolute;left:5px;top:13px;width:7px;height:1px;background:#EEF4FE"></div></div>
<div style="position:absolute;left:354px;top:765px;width:19px;height:20px;border:1px solid #fff;border-radius:3px;background:linear-gradient(135deg,#DCE6FD 0%,#C3D5FD 40%,#B3C8F9 100%);box-shadow:0 1px 0 #A8BEF0, 1px 0 0 #B0C4F4"><svg style="position:absolute;left:0;top:0" width="18" height="19"><path d="M5 8 L9 12 L13 8" fill="none" stroke="#4D6185" stroke-width="2.2"/></svg></div>
<div style="position:absolute;left:722px;top:166px;width:20px;height:620px;background:linear-gradient(to right,#F3F1EC,#FEFEFB 40%,#FEFEFB 80%,#EEEDE5)"></div>
<div style="position:absolute;left:722px;top:166px;width:19px;height:20px;border:1px solid #fff;border-radius:3px;background:linear-gradient(135deg,#DCE6FD 0%,#C3D5FD 40%,#B3C8F9 100%);box-shadow:0 1px 0 #A8BEF0, 1px 0 0 #B0C4F4"><svg style="position:absolute;left:0;top:0" width="18" height="19"><path d="M5 11 L9 7 L13 11" fill="none" stroke="#4D6185" stroke-width="2.2"/></svg></div>
<div style="position:absolute;left:722px;top:583px;width:19px;height:19px;border:1px solid #fff;border-radius:3px;background:linear-gradient(135deg,#DCE6FD 0%,#C3D5FD 40%,#B3C8F9 100%);box-shadow:0 1px 0 #A8BEF0, 1px 0 0 #B0C4F4"><div style="position:absolute;left:5px;top:5px;width:7px;height:1px;background:#8CB0F8"></div><div style="position:absolute;left:5px;top:4px;width:7px;height:1px;background:#EEF4FE"></div><div style="position:absolute;left:5px;top:7px;width:7px;height:1px;background:#8CB0F8"></div><div style="position:absolute;left:5px;top:6px;width:7px;height:1px;background:#EEF4FE"></div><div style="position:absolute;left:5px;top:9px;width:7px;height:1px;background:#8CB0F8"></div><div style="position:absolute;left:5px;top:8px;width:7px;height:1px;background:#EEF4FE"></div><div style="position:absolute;left:5px;top:11px;width:7px;height:1px;background:#8CB0F8"></div><div style="position:absolute;left:5px;top:10px;width:7px;height:1px;background:#EEF4FE"></div></div>
<div style="position:absolute;left:722px;top:765px;width:19px;height:20px;border:1px solid #fff;border-radius:3px;background:linear-gradient(135deg,#DCE6FD 0%,#C3D5FD 40%,#B3C8F9 100%);box-shadow:0 1px 0 #A8BEF0, 1px 0 0 #B0C4F4"><svg style="position:absolute;left:0;top:0" width="18" height="19"><path d="M5 8 L9 12 L13 8" fill="none" stroke="#4D6185" stroke-width="2.2"/></svg></div>
<div style="position:absolute;left:4px;top:794px;width:1122px;height:28px;background:#ECE9D8"></div>
<div style="position:absolute;left:4px;top:794px;width:1122px;height:2px;background:#F1EFE2"></div>
<div style="position:absolute;left:4px;top:796px;width:303px;height:26px;border-top:1px solid #ACA899;border-left:1px solid #ACA899;border-right:1px solid #fff;border-bottom:1px solid #fff"></div>
<div style="position:absolute;left:309px;top:796px;width:301px;height:26px;border-top:1px solid #ACA899;border-left:1px solid #ACA899;border-right:1px solid #fff;border-bottom:1px solid #fff"></div>
<div style="position:absolute;left:612px;top:796px;width:514px;height:26px;border-top:1px solid #ACA899;border-left:1px solid #ACA899;border-right:1px solid #fff;border-bottom:1px solid #fff"></div>
<div class="t" style="left:6px;top:798px;line-height:22px;font-family:'Liberation Serif',serif;font-size:16px;-webkit-text-stroke:0;transform-origin:0 0;transform:scaleX(0.885)">Position is 68/3602</div>
<div class="t" style="left:310px;top:798px;line-height:22px;font-family:'Liberation Serif',serif;font-size:16px;-webkit-text-stroke:0;transform-origin:0 0;transform:scaleX(0.91)">Find in 2013/3792</div>
<div class="t" style="left:614px;top:798px;line-height:22px;font-family:'Liberation Serif',serif;font-size:16px;-webkit-text-stroke:0;transform-origin:0 0;transform:scaleX(0.88)">(R475.1)</div>
<svg style="position:absolute;left:1108px;top:806px" width="18" height="16"><g stroke-width="1"><path d="M16 3 L3 16 M16 7 L7 16 M16 11 L11 16" stroke="#fff"/><path d="M17 3 L4 16 M17 7 L8 16 M17 11 L12 16" stroke="#ACA899"/></g></svg>
</body></html>
